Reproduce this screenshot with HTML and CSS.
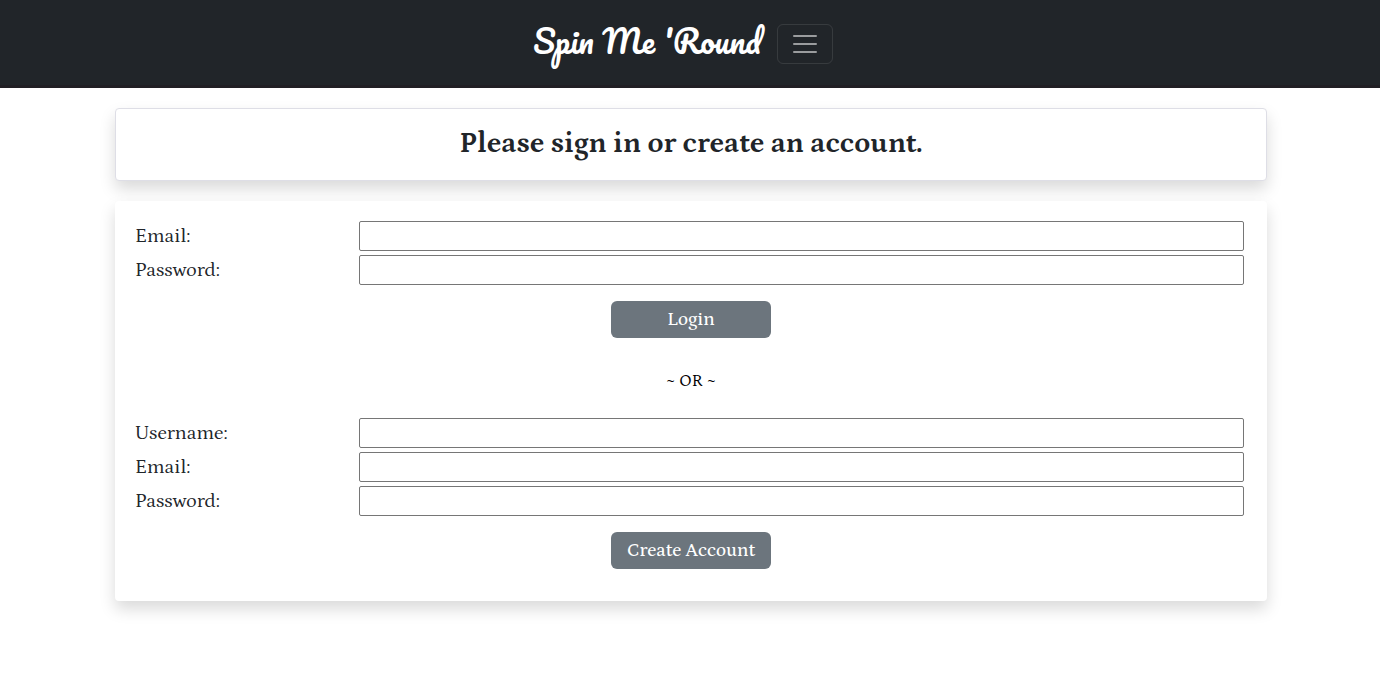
FILE: index.html
```html
<!DOCTYPE html>
<html lang="en">
<head>
<meta charset="utf-8">
<title>Spin Me 'Round</title>
<link rel="stylesheet" href="styles.css">
</head>
<body>
<header class="navbar">
  <a class="brand" href="#">Spin Me 'Round</a>
  <button class="toggler" type="button" aria-label="Toggle navigation">
    <svg width="30" height="30" viewBox="0 0 30 30" aria-hidden="true"><path stroke="currentColor" stroke-linecap="round" stroke-miterlimit="10" stroke-width="2" d="M4 7h22M4 15h22M4 23h22"/></svg>
  </button>
</header>
<main class="content">
  <section class="card notice">
    <h1 class="title">Please sign in or create an account.</h1>
  </section>
  <section class="card forms">
    <form class="form">
      <div class="row"><label for="login-email">Email:</label><input class="field" id="login-email" type="email"></div>
      <div class="row"><label for="login-password">Password:</label><input class="field" id="login-password" type="password"></div>
      <button class="submit" type="submit">Login</button>
    </form>
    <p class="divider">~ OR ~</p>
    <form class="form">
      <div class="row"><label for="new-username">Username:</label><input class="field" id="new-username" type="text"></div>
      <div class="row"><label for="new-email">Email:</label><input class="field" id="new-email" type="email"></div>
      <div class="row"><label for="new-password">Password:</label><input class="field" id="new-password" type="password"></div>
      <button class="submit" type="submit">Create Account</button>
    </form>
  </section>
</main>
</body>
</html>
```
FILE: styles.css
```css
* { box-sizing: border-box; }
body {
  margin: 0;
  background: #fff;
  color: #212529;
  font-family: "Petrona", "Liberation Serif", serif;
  font-size: 20px;
  line-height: 24px;
}
.navbar {
  display: flex;
  align-items: center;
  justify-content: center;
  gap: 16px;
  min-height: 88px;
  padding: 0 14px 0 0;
  background: #212529;
  border-bottom: 3px solid #211f24;
}
.brand {
  color: #fff;
  font-family: "Pacifico", "Liberation Serif", cursive;
  font-size: 32px;
  font-weight: 400;
  line-height: 48px;
  padding-bottom: 6px;
  text-decoration: none;
}
.toggler {
  display: flex;
  align-items: center;
  justify-content: center;
  width: 56px;
  height: 40px;
  margin-top: 3px;
  padding: 0;
  color: rgba(255, 255, 255, 0.55);
  background: transparent;
  border: 1px solid rgba(255, 255, 255, 0.1);
  border-radius: 6px;
}
.content {
  display: grid;
  gap: 20px;
  padding: 20px 113px 80px 115px;
}
.card {
  background: #fff;
  border-radius: 4px;
  box-shadow: 0 8px 16px rgba(0, 0, 0, 0.15);
}
.notice {
  padding: 16px 16px 18px;
  border: 1px solid #dedee6;
}
.title {
  margin: 0;
  font-size: 29px;
  font-weight: 700;
  line-height: 37px;
  text-align: center;
}
.forms { padding: 20px 20px 32px; }
.form {
  display: flex;
  flex-direction: column;
  gap: 4px;
}
.row {
  display: grid;
  grid-template-columns: 224px 1fr;
  align-items: center;
  padding-right: 3px;
}
.field {
  width: 100%;
  height: 30px;
  padding: 1px 4px;
  border: 1px solid #767676;
  border-radius: 2px;
  background: #fff;
  font: inherit;
}
.submit {
  align-self: center;
  width: 160px;
  height: 37px;
  margin-top: 12px;
  padding: 0;
  color: #fff;
  background: #6c757d;
  border: 0;
  border-radius: 6px;
  font: inherit;
  font-size: 19px;
  font-weight: 500;
}
.divider {
  margin: 0;
  padding: 31px 0 25px;
  color: #000;
  font-size: 17px;
  text-align: center;
}
```
